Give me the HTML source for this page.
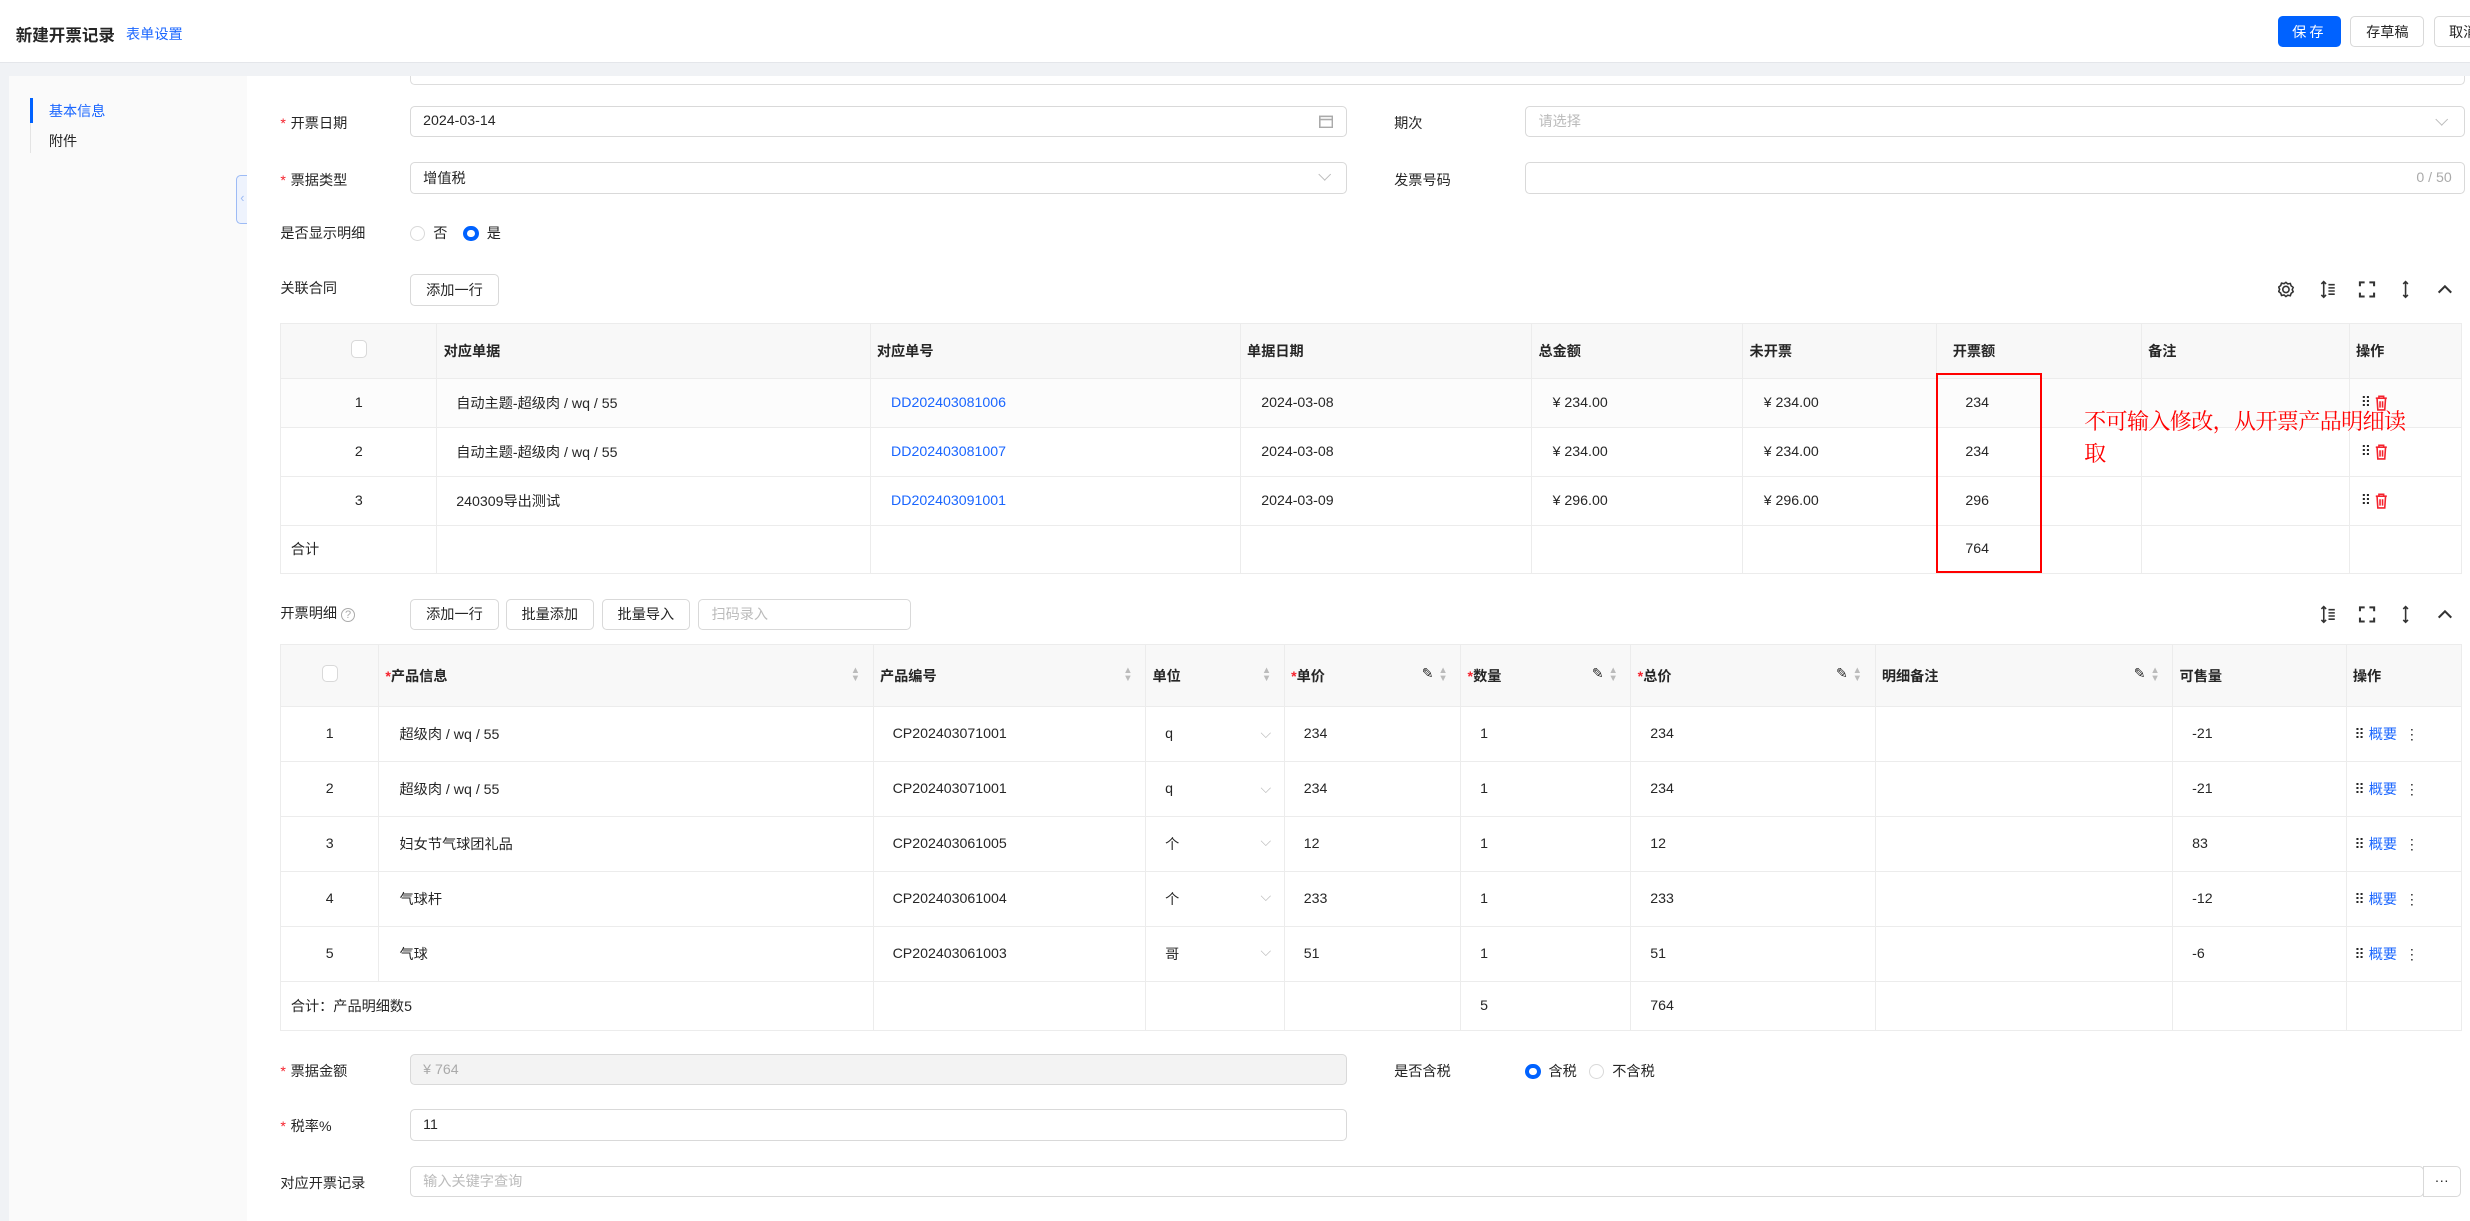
<!DOCTYPE html>
<html><head><meta charset="utf-8">
<style>
*{box-sizing:border-box;margin:0;padding:0}
html,body{width:2470px;height:1221px;overflow:hidden;background:#f0f2f5}
#w{zoom:1.5753;width:1568px;height:775px;position:relative;font-family:"Liberation Sans","Noto Sans CJK SC",sans-serif;font-size:9px;color:#262626;background:#f0f2f5;overflow:hidden}
.a{position:absolute}
.hdr{left:0;top:0;width:1568px;height:40px;background:#fff;border-bottom:1px solid #e4e6ea}
.btn{position:absolute;height:20px;border:1px solid #d9d9d9;border-radius:3px;background:#fff;font-size:9px;display:flex;align-items:center;justify-content:center;color:#262626}
.inp{position:absolute;height:20px;border:1px solid #d9d9d9;border-radius:3px;background:#fff;display:flex;align-items:center;padding:0 8px;font-size:9px}
.lbl{position:absolute;font-size:9px;color:#262626;line-height:12px}
.req::before{content:"*";color:#f5222d;margin-right:3px}
.radio{display:inline-block;width:10px;height:10px;border:1px solid #d9d9d9;border-radius:50%;vertical-align:-2px;margin-right:5px;background:#fff}
.radio.on{border:3px solid #0062ff}
table{position:absolute;border-collapse:collapse;table-layout:fixed;font-size:9px}
td,th{border:1px solid #ececec;padding:0 8px;white-space:nowrap;overflow:hidden;text-align:left}
th{background:#f8f8f8;font-weight:bold;color:#262626}
.c{text-align:center}
.blue{color:#1a66ff}
.cb{display:inline-block;width:10px;height:11px;border:1px solid #d9d9d9;border-radius:3px;background:#fff}
.chev{position:absolute;width:6px;height:6px;border-right:1px solid #bbb;border-bottom:1px solid #bbb;transform:rotate(45deg)}
.sort{float:right;color:#bbb;font-size:6px;line-height:5px;margin-top:1px}
.st{color:#f5222d}
svg{vertical-align:middle}
</style></head><body><div id="w">
<div class="a hdr">
 <div class="a" style="left:10px;top:14px;font-size:10.5px;font-weight:bold;">新建开票记录</div>
 <div class="a blue" style="left:80px;top:15px;font-size:9px;">表单设置</div>
 <div class="btn" style="left:1446px;top:10px;width:40px;background:#0062ff;border-color:#0062ff;color:#fff;letter-spacing:2px">保存</div>
 <div class="btn" style="left:1492px;top:10px;width:47px">存草稿</div>
 <div class="btn" style="left:1545px;top:10px;width:40px;justify-content:flex-start;padding-left:9px">取消</div>
</div>
<div class="a" style="left:6px;top:48px;width:151px;height:727px;background:#fafafa"></div>
<div class="a" style="left:19px;top:62px;width:1px;height:35px;background:#e4e4e4"></div>
<div class="a" style="left:19px;top:62px;width:2px;height:16px;background:#0062ff"></div>
<div class="a blue" style="left:31px;top:64px">基本信息</div>
<div class="a" style="left:31px;top:83px">附件</div>
<div class="a" style="left:150px;top:111px;width:7px;height:31px;border:1px solid #9dbbf5;border-right:none;border-radius:3px 0 0 3px;background:#eef3fd;color:#9dbbf5;font-size:8px;line-height:29px;text-align:center">‹</div>
<div class="a" style="left:157px;top:48px;width:1411px;height:727px;background:#fff"></div>
<div class="a" style="left:260px;top:48px;width:1305px;height:6px;border:1px solid #ddd;border-top:none;border-radius:0 0 3px 3px;background:#fff"></div>

<div class="lbl req" style="left:178px;top:73px">开票日期</div>
<div class="inp" style="left:260px;top:67px;width:595px">2024-03-14<svg style="margin-left:auto" width="9" height="9" viewBox="0 0 9 9"><rect x="0.5" y="1.5" width="8" height="7" fill="none" stroke="#aaa"/><line x1="0.5" y1="3.5" x2="8.5" y2="3.5" stroke="#aaa"/></svg></div>
<div class="lbl" style="left:885px;top:73px">期次</div>
<div class="inp" style="left:968px;top:67px;width:597px;color:#bbb">请选择</div>
<div class="chev" style="left:1547px;top:73px"></div>

<div class="lbl req" style="left:178px;top:109px">票据类型</div>
<div class="inp" style="left:260px;top:103px;width:595px">增值税</div>
<div class="chev" style="left:838px;top:108px"></div>
<div class="lbl" style="left:885px;top:109px">发票号码</div>
<div class="inp" style="left:968px;top:103px;width:597px;justify-content:flex-end;color:#aaa">0 / 50</div>

<div class="lbl" style="left:178px;top:143px">是否显示明细</div>
<div class="lbl" style="left:260px;top:143px"><span class="radio"></span>否 &nbsp;&nbsp;&nbsp;<span class="radio on"></span>是</div>

<div class="lbl" style="left:178px;top:178px">关联合同</div>
<div class="btn" style="left:260px;top:174px;width:57px">添加一行</div>
<svg class="a" style="left:1446px;top:178px" width="112" height="12" viewBox="0 0 112 12" fill="none" stroke="#333" stroke-width="1">
<circle cx="5" cy="6" r="2"/><path d="M5 1.5l1.2 1 1.6-.3.5 1.5 1.3 1-.6 1.4.6 1.4-1.3 1-.5 1.5-1.6-.3L5 10.5 3.8 9.5l-1.6.3-.5-1.5-1.3-1 .6-1.4-.6-1.4 1.3-1 .5-1.5 1.6.3z"/>
<path d="M29 1v10M27.5 2.5L29 1l1.5 1.5M27.5 9.5L29 11l1.5-1.5M32 3h4M32 5h4M32 7h4M32 9h4"/>
<path d="M52 4V1.5h3M58 1.5h3V4M61 8v2.5h-3M55 10.5h-3V8" stroke-width="1.3"/>
<path d="M81 1v10M79.5 2.5L81 1l1.5 1.5M79.5 9.5L81 11l1.5-1.5"/>
<path d="M102 8l4-4 4 4" stroke-width="1.3"/></svg>

<table style="left:178px;top:205px;width:1384px">
<colgroup><col style="width:99px"><col style="width:275px"><col style="width:235px"><col style="width:185px"><col style="width:134px"><col style="width:123px"><col style="width:130px"><col style="width:132px"><col style="width:71px"></colgroup>
<tr style="height:35px"><th class="c"><span class="cb"></span></th><th style="padding-left:4px">对应单据</th><th style="padding-left:4px">对应单号</th><th style="padding-left:4px">单据日期</th><th style="padding-left:4px">总金额</th><th style="padding-left:4px">未开票</th><th style="padding-left:10px">开票额</th><th style="padding-left:4px">备注</th><th style="padding-left:4px">操作</th></tr>
<tr style="height:31px;background:#fcfcfc"><td class="c">1</td><td style="padding-left:12px">自动主题-超级肉 / wq / 55</td><td class="blue" style="padding-left:13px">DD202403081006</td><td style="padding-left:13px">2024-03-08</td><td style="padding-left:13px">¥ 234.00</td><td style="padding-left:13px">¥ 234.00</td><td style="padding-left:18px">234</td><td></td><td style="padding-left:7px">⠿ <svg width="8" height="10" viewBox="0 0 8 10" fill="none" stroke="#f5222d"><path d="M0.5 2h7M2.5 2V0.8h3V2M1.3 2l.5 7.5h4.4l.5-7.5M3.2 4v4M4.8 4v4"/></svg></td></tr>
<tr style="height:31px"><td class="c">2</td><td style="padding-left:12px">自动主题-超级肉 / wq / 55</td><td class="blue" style="padding-left:13px">DD202403081007</td><td style="padding-left:13px">2024-03-08</td><td style="padding-left:13px">¥ 234.00</td><td style="padding-left:13px">¥ 234.00</td><td style="padding-left:18px">234</td><td></td><td style="padding-left:7px">⠿ <svg width="8" height="10" viewBox="0 0 8 10" fill="none" stroke="#f5222d"><path d="M0.5 2h7M2.5 2V0.8h3V2M1.3 2l.5 7.5h4.4l.5-7.5M3.2 4v4M4.8 4v4"/></svg></td></tr>
<tr style="height:31px"><td class="c">3</td><td style="padding-left:12px">240309导出测试</td><td class="blue" style="padding-left:13px">DD202403091001</td><td style="padding-left:13px">2024-03-09</td><td style="padding-left:13px">¥ 296.00</td><td style="padding-left:13px">¥ 296.00</td><td style="padding-left:18px">296</td><td></td><td style="padding-left:7px">⠿ <svg width="8" height="10" viewBox="0 0 8 10" fill="none" stroke="#f5222d"><path d="M0.5 2h7M2.5 2V0.8h3V2M1.3 2l.5 7.5h4.4l.5-7.5M3.2 4v4M4.8 4v4"/></svg></td></tr>
<tr style="height:31px"><td style="padding-left:6px">合计</td><td></td><td></td><td></td><td></td><td></td><td style="padding-left:18px">764</td><td></td><td></td></tr>
</table>
<div class="a" style="left:1229px;top:237px;width:67px;height:127px;border:1.5px solid #f00"></div>
<div class="a" style="left:1323px;top:258px;font-family:'Liberation Serif','Noto Serif CJK SC',serif;font-size:14px;color:#f00;line-height:20px;letter-spacing:-0.4px">不可输入修改，从开票产品明细读<br>取</div>

<div class="lbl" style="left:178px;top:384px">开票明细 <span style="color:#aaa;display:inline-block;width:9px;height:9px;border:1px solid #aaa;border-radius:50%;font-size:7px;line-height:8px;text-align:center">?</span></div>
<div class="btn" style="left:260px;top:380px;width:57px">添加一行</div>
<div class="btn" style="left:321px;top:380px;width:56px">批量添加</div>
<div class="btn" style="left:382px;top:380px;width:56px">批量导入</div>
<div class="inp" style="left:443px;top:380px;width:135px;color:#bbb">扫码录入</div>
<svg class="a" style="left:1472px;top:384px" width="86" height="12" viewBox="0 0 86 12" fill="none" stroke="#333" stroke-width="1">
<path d="M3 1v10M1.5 2.5L3 1l1.5 1.5M1.5 9.5L3 11l1.5-1.5M6 3h4M6 5h4M6 7h4M6 9h4"/>
<path d="M26 4V1.5h3M32 1.5h3V4M35 8v2.5h-3M29 10.5h-3V8" stroke-width="1.3"/>
<path d="M55 1v10M53.5 2.5L55 1l1.5 1.5M53.5 9.5L55 11l1.5-1.5"/>
<path d="M76 8l4-4 4 4" stroke-width="1.3"/></svg>

<table style="left:178px;top:409px;width:1384px">
<colgroup><col style="width:62px"><col style="width:314px"><col style="width:173px"><col style="width:88px"><col style="width:112px"><col style="width:108px"><col style="width:155px"><col style="width:189px"><col style="width:110px"><col style="width:73px"></colgroup>
<tr style="height:39px"><th class="c"><span class="cb"></span></th><th style="padding-left:4px"><span class="st">*</span>产品信息<span class="sort">▲<br>▼</span></th><th style="padding-left:4px">产品编号<span class="sort">▲<br>▼</span></th><th style="padding-left:4px">单位<span class="sort">▲<br>▼</span></th><th style="padding-left:4px"><span class="st">*</span>单价<span class="sort">▲<br>▼</span><span style="float:right;margin-right:3px;font-weight:normal">✎</span></th><th style="padding-left:4px"><span class="st">*</span>数量<span class="sort">▲<br>▼</span><span style="float:right;margin-right:3px;font-weight:normal">✎</span></th><th style="padding-left:4px"><span class="st">*</span>总价<span class="sort">▲<br>▼</span><span style="float:right;margin-right:3px;font-weight:normal">✎</span></th><th style="padding-left:4px">明细备注<span class="sort">▲<br>▼</span><span style="float:right;margin-right:3px;font-weight:normal">✎</span></th><th style="padding-left:4px">可售量</th><th style="padding-left:4px">操作</th></tr>
<tr style="height:35px"><td class="c">1</td><td style="padding-left:13px">超级肉 / wq / 55</td><td style="padding-left:12px">CP202403071001</td><td style="padding-left:12px">q<span style="float:right;color:#bbb">⌵</span></td><td style="padding-left:12px">234</td><td style="padding-left:12px">1</td><td style="padding-left:12px">234</td><td></td><td style="padding-left:12px">-21</td><td style="padding-left:5px">⠿ <span class="blue">概要</span> &nbsp;⋮</td></tr>
<tr style="height:35px"><td class="c">2</td><td style="padding-left:13px">超级肉 / wq / 55</td><td style="padding-left:12px">CP202403071001</td><td style="padding-left:12px">q<span style="float:right;color:#bbb">⌵</span></td><td style="padding-left:12px">234</td><td style="padding-left:12px">1</td><td style="padding-left:12px">234</td><td></td><td style="padding-left:12px">-21</td><td style="padding-left:5px">⠿ <span class="blue">概要</span> &nbsp;⋮</td></tr>
<tr style="height:35px"><td class="c">3</td><td style="padding-left:13px">妇女节气球团礼品</td><td style="padding-left:12px">CP202403061005</td><td style="padding-left:12px">个<span style="float:right;color:#bbb">⌵</span></td><td style="padding-left:12px">12</td><td style="padding-left:12px">1</td><td style="padding-left:12px">12</td><td></td><td style="padding-left:12px">83</td><td style="padding-left:5px">⠿ <span class="blue">概要</span> &nbsp;⋮</td></tr>
<tr style="height:35px"><td class="c">4</td><td style="padding-left:13px">气球杆</td><td style="padding-left:12px">CP202403061004</td><td style="padding-left:12px">个<span style="float:right;color:#bbb">⌵</span></td><td style="padding-left:12px">233</td><td style="padding-left:12px">1</td><td style="padding-left:12px">233</td><td></td><td style="padding-left:12px">-12</td><td style="padding-left:5px">⠿ <span class="blue">概要</span> &nbsp;⋮</td></tr>
<tr style="height:35px"><td class="c">5</td><td style="padding-left:13px">气球</td><td style="padding-left:12px">CP202403061003</td><td style="padding-left:12px">哥<span style="float:right;color:#bbb">⌵</span></td><td style="padding-left:12px">51</td><td style="padding-left:12px">1</td><td style="padding-left:12px">51</td><td></td><td style="padding-left:12px">-6</td><td style="padding-left:5px">⠿ <span class="blue">概要</span> &nbsp;⋮</td></tr>
<tr style="height:31px"><td colspan="2" style="padding-left:6px">合计：产品明细数5</td><td></td><td></td><td></td><td style="padding-left:12px">5</td><td style="padding-left:12px">764</td><td></td><td></td><td></td></tr>
</table>

<div class="lbl req" style="left:178px;top:675px">票据金额</div>
<div class="inp" style="left:260px;top:669px;width:595px;background:#f3f3f3;color:#aaa">¥ 764</div>
<div class="lbl" style="left:885px;top:675px">是否含税</div>
<div class="lbl" style="left:968px;top:675px"><span class="radio on"></span>含税 &nbsp;&nbsp;<span class="radio"></span>不含税</div>
<div class="lbl req" style="left:178px;top:710px">税率%</div>
<div class="inp" style="left:260px;top:704px;width:595px">11</div>
<div class="lbl" style="left:178px;top:746px">对应开票记录</div>
<div class="inp" style="left:260px;top:740px;width:1279px;color:#bbb">输入关键字查询</div>
<div class="btn" style="left:1538px;top:740px;width:24px;border-radius:0 3px 3px 0">···</div>
</div></body></html>
